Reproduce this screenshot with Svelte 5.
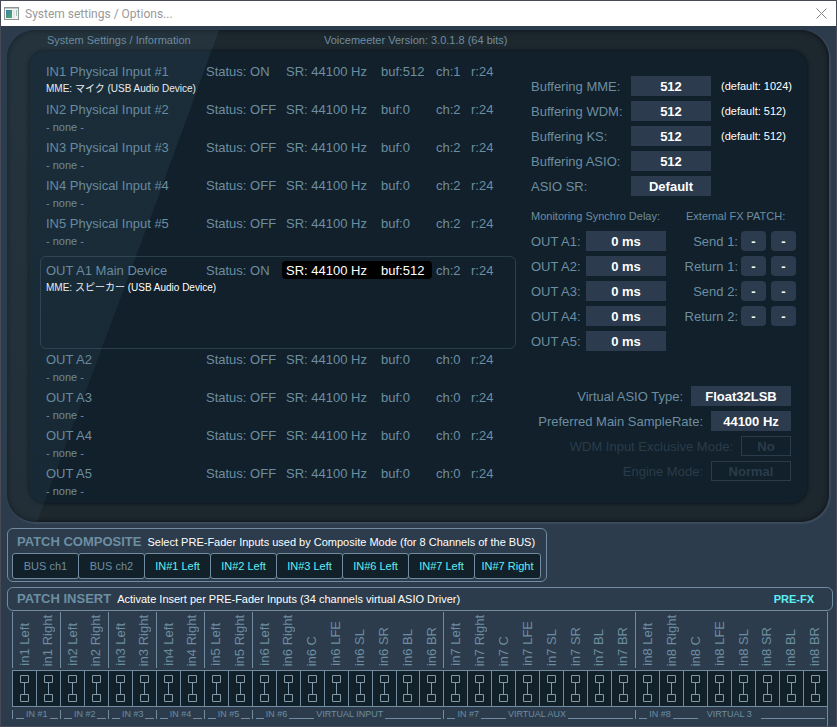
<script lang="ts">
	type Device = {
		name: string;
		device?: string;
		on?: boolean;
		buf: number;
		ch: number;
		main?: boolean;
	};

	const devices: Device[] = [
		{ name: 'IN1 Physical Input #1', device: 'MME: マイク (USB Audio Device)', on: true, buf: 512, ch: 1 },
		{ name: 'IN2 Physical Input #2', buf: 0, ch: 2 },
		{ name: 'IN3 Physical Input #3', buf: 0, ch: 2 },
		{ name: 'IN4 Physical Input #4', buf: 0, ch: 2 },
		{ name: 'IN5 Physical Input #5', buf: 0, ch: 2 },
		{ name: 'OUT A1 Main Device', device: 'MME: スピーカー (USB Audio Device)', on: true, buf: 512, ch: 2, main: true },
		{ name: 'OUT A2', buf: 0, ch: 0 },
		{ name: 'OUT A3', buf: 0, ch: 0 },
		{ name: 'OUT A4', buf: 0, ch: 0 },
		{ name: 'OUT A5', buf: 0, ch: 0 }
	];

	const buffering = [
		{ label: 'Buffering MME:', value: '512', hint: '(default: 1024)' },
		{ label: 'Buffering WDM:', value: '512', hint: '(default: 512)' },
		{ label: 'Buffering KS:', value: '512', hint: '(default: 512)' },
		{ label: 'Buffering ASIO:', value: '512' },
		{ label: 'ASIO SR:', value: 'Default' }
	];

	const delays = ['OUT A1:', 'OUT A2:', 'OUT A3:', 'OUT A4:', 'OUT A5:'];
	const fxPatch = ['Send 1:', 'Return 1:', 'Send 2:', 'Return 2:'];

	const options = [
		{ label: 'Virtual ASIO Type:', value: 'Float32LSB', size: 'lg' },
		{ label: 'Preferred Main SampleRate:', value: '44100 Hz', size: 'md' },
		{ label: 'WDM Input Exclusive Mode:', value: 'No', size: 'sm', disabled: true },
		{ label: 'Engine Mode:', value: 'Normal', size: 'md', disabled: true }
	];

	const composite = [
		'BUS ch1', 'BUS ch2', 'IN#1 Left', 'IN#2 Left',
		'IN#3 Left', 'IN#6 Left', 'IN#7 Left', 'IN#7 Right'
	];

	const stereo = ['Left', 'Right'];
	const surround = ['Left', 'Right', 'C', 'LFE', 'SL', 'SR', 'BL', 'BR'];

	const groups = [
		...[1, 2, 3, 4, 5].map((id) => ({ id, channels: stereo, virtual: '' })),
		{ id: 6, channels: surround, virtual: 'VIRTUAL INPUT' },
		{ id: 7, channels: surround, virtual: 'VIRTUAL AUX' },
		{ id: 8, channels: surround, virtual: 'VIRTUAL 3' }
	];

	let inserts = $state<Record<string, boolean>>({});
	let preFx = $state(true);
</script>

<div class="window">
	<header class="titlebar">
		<svg class="app-icon" viewBox="0 0 15 13" width="15" height="13">
			<defs>
				<linearGradient id="app-grad" x1="0" y1="0" x2="1" y2="1">
					<stop offset="0" stop-color="#3c7fa8" />
					<stop offset="1" stop-color="#4fa868" />
				</linearGradient>
			</defs>
			<rect x="0.5" y="0.5" width="14" height="12" fill="#f4f6f6" stroke="#8e9496" />
			<rect x="1" y="1" width="13" height="1" fill="#c3c9cb" />
			<rect x="2" y="3" width="6" height="8" fill="url(#app-grad)" />
			<rect x="9" y="3" width="2" height="8" fill="#e3e8e6" />
			<rect x="12" y="3" width="1" height="6" fill="#9fc4b0" />
		</svg>
		<h1>System settings / Options...</h1>
		<button class="close" aria-label="Close">
			<svg viewBox="0 0 11 11" width="11" height="11"><path d="M0.5 0.5l10 10M10.5 0.5l-10 10" stroke="#8a8a8a" fill="none" /></svg>
		</button>
	</header>

	<main class="bezel">
		<div class="bezel-head">
			<h2>System Settings / Information</h2>
			<span>Voicemeeter Version: 3.0.1.8 (64 bits)</span>
		</div>

		<div class="screen">
			<section class="devices">
				{#each devices as d}
					<div class="device" class:device--main={d.main}>
						<div class="device-line">
							<span class="c-name">{d.name}</span>
							<span class="c-status">Status: {d.on ? 'ON' : 'OFF'}</span>
							<span class="format" class:format--active={d.main}>
								<span class="c-sr">SR: 44100 Hz</span>
								<span class="c-buf">buf:{d.buf}</span>
							</span>
							<span class="c-ch">ch:{d.ch}</span>
							<span>r:24</span>
						</div>
						<div class="device-sub" class:device-sub--set={d.device}>{d.device ?? '- none -'}</div>
					</div>
				{/each}
			</section>

			<section class="settings">
				<div class="rows">
					{#each buffering as b, i}
						<div class="row">
							<span class="buf-label" id="buf-{i}">{b.label}</span>
							<button class="value value--md" aria-describedby="buf-{i}">{b.value}</button>
							{#if b.hint}<span class="hint">{b.hint}</span>{/if}
						</div>
					{/each}
				</div>

				<div class="pair">
					<div class="rows delays">
						<h3>Monitoring Synchro Delay:</h3>
						{#each delays as label, i}
							<div class="row">
								<span class="delay-label" id="delay-{i}">{label}</span>
								<button class="value value--md" aria-describedby="delay-{i}">0 ms</button>
							</div>
						{/each}
					</div>
					<div class="rows fx">
						<h3>External FX PATCH:</h3>
						{#each fxPatch as label, i}
							<div class="row fx-row">
								<span id="fx-{i}">{label}</span>
								<button class="value value--fx" aria-describedby="fx-{i}">-</button>
								<button class="value value--fx" aria-describedby="fx-{i}">-</button>
							</div>
						{/each}
					</div>
				</div>

				<div class="rows options">
					{#each options as o, i}
						<div class="row option" class:option--disabled={o.disabled}>
							<span id="opt-{i}">{o.label}</span>
							<button class="value value--{o.size}" disabled={o.disabled} aria-describedby="opt-{i}">{o.value}</button>
						</div>
					{/each}
				</div>
			</section>
		</div>
	</main>

	<section class="panel composite">
		<div class="panel-head">
			<h2>PATCH COMPOSITE</h2>
			<p>Select PRE-Fader Inputs used by Composite Mode (for 8 Channels of the BUS)</p>
		</div>
		<div class="cells">
			{#each composite as c}
				<button class="cell" class:cell--set={c.startsWith('IN')}>{c}</button>
			{/each}
		</div>
	</section>

	<section class="panel insert">
		<div class="panel-head">
			<h2>PATCH INSERT</h2>
			<p>Activate Insert per PRE-Fader Inputs (34 channels virtual ASIO Driver)</p>
			<button class="prefx" aria-pressed={preFx} onclick={() => (preFx = !preFx)}>PRE-FX</button>
		</div>
	</section>

	<section class="matrix">
		{#each groups as g}
			<div class="group" style="flex-grow: {g.channels.length}">
				<div class="names">
					{#each g.channels as ch}
						<span class="ch-name"><span class="ch-text">in{g.id} {ch}</span></span>
					{/each}
				</div>
				<div class="plugs">
					{#each g.channels as ch}
						{@const key = `in${g.id} ${ch}`}
						<button
							class="plug"
							class:plug--on={inserts[key]}
							aria-label="Insert {key}"
							aria-pressed={!!inserts[key]}
							onclick={() => (inserts[key] = !inserts[key])}
						>
							<svg viewBox="0 0 9 27" width="9" height="27" fill="none" stroke="currentColor">
								<path d="M0.5 0.5h8v7h-8zM4.5 8v11M0.5 19.5h8v7h-8z" />
							</svg>
						</button>
					{/each}
				</div>
				<div class="legend">
					<i class="rule rule--start"></i>
					<span>IN #{g.id}</span>
					{#if g.virtual}
						<i class="rule rule--mid"></i>
						<span class:spaced={g.id === 8}>{g.virtual}</span>
					{/if}
					<i class="rule rule--end"></i>
				</div>
			</div>
		{/each}
	</section>
</div>

<style>
	:global(body) {
		background: #2c3c4c;
	}

	.window {
		--line: #718ba0;
		--text: #6d8ea1;
		--face: #2c3b4d;
		--dark: #12202a;
		box-sizing: border-box;
		border: 1px solid #474b58;
		background: #2c3c4c;
		color: var(--text);
		font-family: 'Liberation Sans', 'Noto Sans CJK JP', sans-serif;
		font-size: 13px;
		line-height: 20px;
	}

	h1, h2, h3, p {
		margin: 0;
		font-weight: normal;
	}

	button {
		box-sizing: border-box;
		margin: 0;
		padding: 0;
		border: 0;
		background: none;
		color: inherit;
		font: inherit;
		cursor: pointer;
	}

	.titlebar {
		display: flex;
		align-items: center;
		height: 25px;
		padding: 0 9px 0 3px;
		background: #fff;
	}

	.titlebar h1 {
		flex: 1;
		margin-left: 6px;
		color: #999;
		font-family: Roboto, sans-serif;
		font-size: 12px;
	}

	.close {
		display: flex;
	}

	.bezel {
		position: relative;
		margin: 4px 7px 0 6px;
		padding: 0 22px 19px;
		border-radius: 28px;
		background: #1d272e;
		box-shadow: inset 0 0 4px 1px #10161c, 1px 1px 1px 1px #3a4a5b;
		overflow: hidden;
	}

	/* diagonal glare over the left part of the glass */
	.bezel::after {
		content: '';
		position: absolute;
		inset: 0;
		background: linear-gradient(180deg, rgba(80, 120, 145, 0.15), rgba(70, 105, 125, 0.12));
		clip-path: polygon(0 0, 212px 0, 150px 170px, 30px 100%, 0 100%);
		pointer-events: none;
	}

	.bezel-head {
		display: flex;
		height: 21px;
		padding-left: 18px;
		font-size: 11px;
	}

	.bezel-head h2 {
		width: 277px;
		font-size: 11px;
	}

	.screen {
		display: flex;
		justify-content: space-between;
		padding: 10px 11px 2px;
		border-radius: 16px;
		background: #11202a;
		box-shadow: 0 0 3px 1px #0d171e;
	}

	.devices {
		flex: 0 1 476px;
	}

	.device {
		box-sizing: border-box;
		height: 38px;
		padding: 0 6px;
	}

	.device--main {
		height: 93px;
		margin-top: 5px;
		padding: 3px 5px;
		border: 1px solid #2b3e4c;
		border-radius: 6px;
	}

	.device-line {
		display: flex;
		height: 20px;
		line-height: 22px;
		white-space: nowrap;
	}

	.c-name {
		width: 160px;
	}

	.c-status {
		width: 76px;
	}

	.format {
		box-sizing: border-box;
		display: flex;
		width: 150px;
		height: 18px;
		margin: 1px 4px 1px 0;
		padding-left: 4px;
		line-height: 20px;
	}

	.format--active {
		border-radius: 4px;
		background: #000;
		color: #fff;
	}

	.c-sr {
		width: 95px;
	}

	.c-ch {
		width: 35px;
	}

	.device-sub {
		font-size: 11px;
		line-height: 16px;
	}

	.device-sub--set {
		color: #fff;
		font-size: 10px;
	}

	.settings {
		width: 265px;
		padding-top: 15px;
	}

	.rows {
		display: flex;
		flex-direction: column;
		gap: 5px;
	}

	.row {
		display: flex;
		height: 20px;
		line-height: 22px;
		white-space: nowrap;
	}

	.buf-label {
		width: 100px;
	}

	.hint {
		margin-left: 10px;
		color: #fff;
		font-size: 11px;
		line-height: 20px;
	}

	.value {
		flex-shrink: 0;
		padding-top: 1px;
		background: var(--face);
		color: #fff;
		font-weight: bold;
		line-height: 19px;
	}

	.value--sm {
		width: 50px;
	}

	.value--md {
		width: 80px;
	}

	.value--lg {
		width: 100px;
	}

	.value--fx {
		width: 25px;
		border-radius: 4px;
	}

	.pair {
		display: flex;
		justify-content: space-between;
		margin-top: 10px;
	}

	h3 {
		font-size: 11px;
		white-space: nowrap;
	}

	.delays {
		width: 135px;
	}

	.delay-label {
		width: 55px;
	}

	.fx {
		width: 110px;
	}

	.fx-row {
		justify-content: flex-end;
		gap: 5px;
	}

	.fx-row span {
		margin-right: -2px;
	}

	.options {
		margin: 35px 5px 0 0;
	}

	.option {
		justify-content: flex-end;
		gap: 8px;
	}

	.option--disabled {
		color: #2a3c4a;
	}

	.option--disabled .value {
		border: 1px solid #2a3c4a;
		background: none;
		color: #2a3c4a;
		line-height: 17px;
	}

	.panel {
		box-sizing: border-box;
		border: 1px solid var(--line);
		border-radius: 6px;
		font-size: 11px;
	}

	.panel-head {
		display: flex;
		align-items: center;
		height: 22px;
		padding: 0 9px;
	}

	.panel-head h2 {
		font-size: 13px;
		font-weight: bold;
	}

	.panel-head p {
		margin-left: 6px;
		color: #fff;
	}

	.composite {
		width: fit-content;
		margin: 6px 6px 0;
		padding: 2px 5px 2px 4px;
	}

	.composite .panel-head {
		padding: 0 0 0 5px;
	}

	.cells {
		display: flex;
	}

	.cell {
		width: 67px;
		height: 26px;
		margin-right: -1px;
		border: 1px solid var(--line);
		border-radius: 3px;
		background: var(--dark);
	}

	.cell:last-child {
		margin-right: 0;
	}

	.cell--set {
		color: #5ff0f5;
	}

	.insert {
		margin: 5px 3px 0 6px;
	}

	.prefx {
		margin-left: auto;
		margin-right: 9px;
		color: #5ff0f5;
		font-size: 11px;
		font-weight: bold;
	}

	.matrix {
		display: flex;
		margin: 1px 8px 0 11px;
		border-right: 1px solid var(--line);
	}

	.group {
		flex-basis: 0;
		min-width: 0;
	}

	.names {
		display: flex;
		height: 56px;
		border-left: 1px solid var(--line);
	}

	.ch-name {
		display: flex;
		flex: 1;
		align-items: flex-end;
		justify-content: center;
		min-width: 0;
		padding-bottom: 2px;
	}

	.ch-text {
		writing-mode: vertical-rl;
		transform: rotate(180deg);
		line-height: 16px;
		white-space: nowrap;
	}

	.plugs {
		display: flex;
		margin-top: 2px;
		border: solid var(--line);
		border-width: 1px 0;
		background: var(--dark);
	}

	.plug {
		display: flex;
		flex: 1;
		justify-content: center;
		height: 35px;
		padding-top: 4px;
		border-left: 1px solid var(--line);
		color: #8299aa;
	}

	.plug--on {
		color: #5ff0f5;
	}

	.legend {
		display: flex;
		align-items: center;
		gap: 2px;
		height: 9px;
		margin: 3px 0 7px;
		padding: 0 2px 0 3px;
		border-left: 1px solid var(--line);
		font-size: 9px;
		line-height: 9px;
		white-space: nowrap;
	}

	.rule {
		align-self: flex-end;
		height: 1px;
		background: var(--line);
	}

	.rule--start {
		width: 8px;
	}

	.rule--mid {
		width: 25px;
	}

	.rule--end {
		flex: 1;
	}

	.spaced {
		margin: 0 7px;
	}
</style>
